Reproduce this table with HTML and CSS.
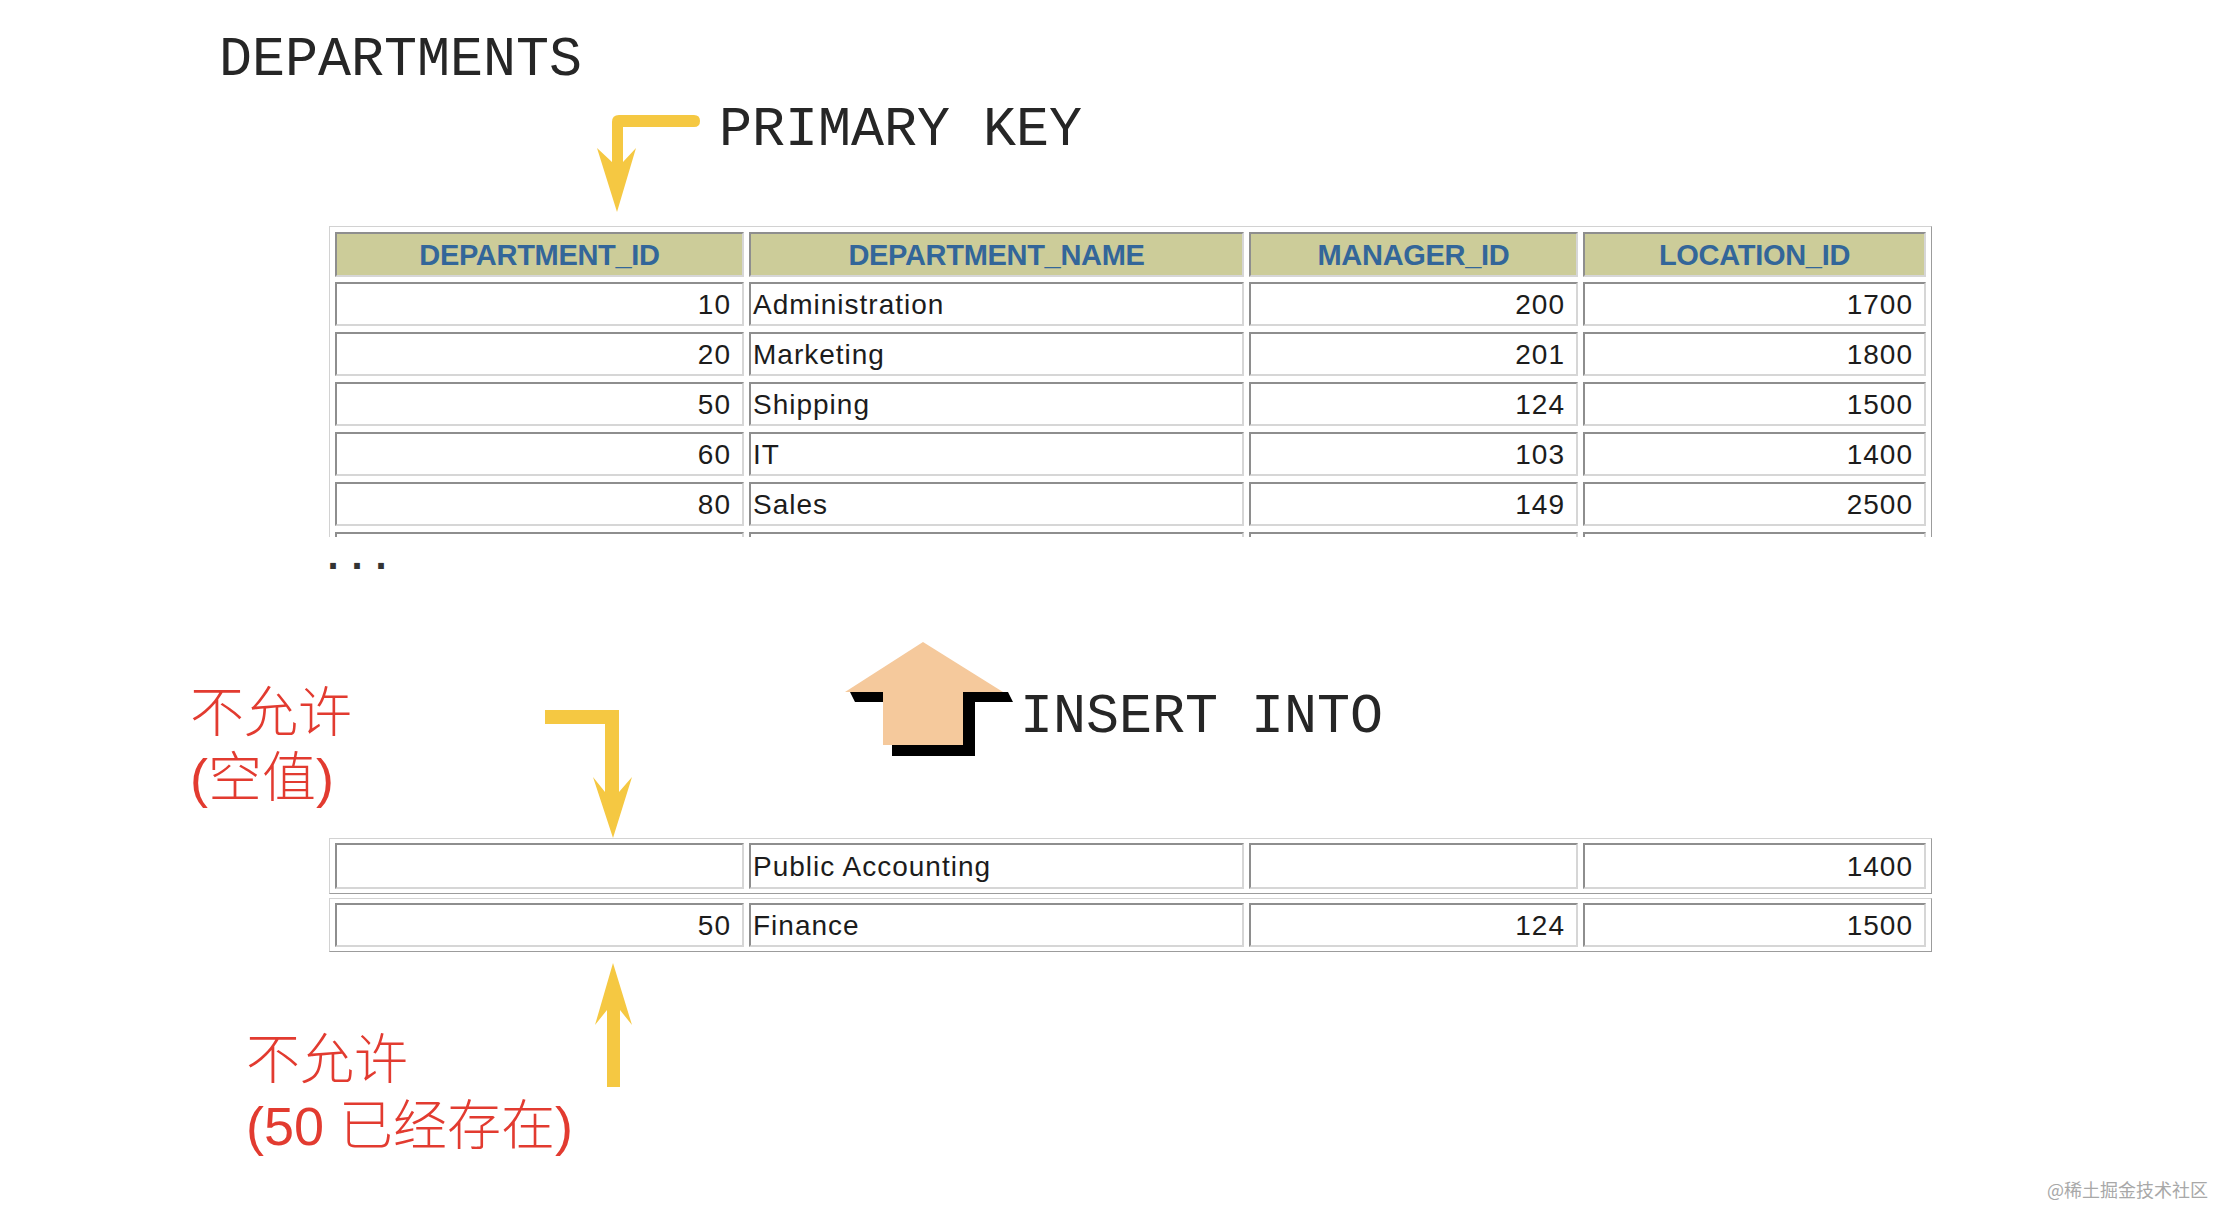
FILE: index.html
```html
<!DOCTYPE html>
<html lang="zh-CN">
<head>
<meta charset="utf-8">
<title>DEPARTMENTS – INSERT INTO</title>
<link rel="stylesheet" href="styles.css">
</head>
<body>
<main class="slide">
  <h1 class="mono title">DEPARTMENTS</h1>
  <div class="mono pk-label">PRIMARY KEY</div>

  <div class="table-window">
    <div class="db-table">
      <div class="cell th">DEPARTMENT_ID</div>
      <div class="cell th">DEPARTMENT_NAME</div>
      <div class="cell th">MANAGER_ID</div>
      <div class="cell th">LOCATION_ID</div>

      <div class="cell num">10</div><div class="cell">Administration</div><div class="cell num">200</div><div class="cell num">1700</div>
      <div class="cell num">20</div><div class="cell">Marketing</div><div class="cell num">201</div><div class="cell num">1800</div>
      <div class="cell num">50</div><div class="cell">Shipping</div><div class="cell num">124</div><div class="cell num">1500</div>
      <div class="cell num">60</div><div class="cell">IT</div><div class="cell num">103</div><div class="cell num">1400</div>
      <div class="cell num">80</div><div class="cell">Sales</div><div class="cell num">149</div><div class="cell num">2500</div>
      <div class="cell num"></div><div class="cell"></div><div class="cell num"></div><div class="cell num"></div>
    </div>
  </div>

  <div class="mono ellipsis">...</div>

  <div class="insert-row">
    <svg class="insert-arrow" width="178" height="120" viewBox="0 0 178 120" aria-hidden="true">
      <polygon points="10,52 168,52 173,62 135,62 135,116 52,116 52,62 15,62" fill="#000"/>
      <polygon points="83,2 163,52 123,52 123,105 43,105 43,52 5,52" fill="#f5c99c"/>
    </svg>
    <span class="mono insert-label">INSERT INTO</span>
  </div>

  <div class="new-rows">
    <div class="db-table single tall">
      <div class="cell num"></div><div class="cell">Public Accounting</div><div class="cell num"></div><div class="cell num">1400</div>
    </div>
    <div class="db-table single">
      <div class="cell num">50</div><div class="cell">Finance</div><div class="cell num">124</div><div class="cell num">1500</div>
    </div>
  </div>

  <p class="note note-dup">不允许<br>(50 已经存在)</p>

  <p class="note note-null">不允许<br>(空值)</p>

  <svg class="arrows" width="2216" height="1206" viewBox="0 0 2216 1206" aria-hidden="true">
    <path d="M612,122 Q612,115 619,115 L694,115 Q700,115 700,121 Q700,127 694,127 L623,127 L623,162 L636,148 L617,212 L597,148 L612,162 Z" fill="#f5c842"/>
    <path d="M545,710 L619,710 L619,792 L632,777 L613,838 L593,777 L605,792 L605,724 L545,724 Z" fill="#f5c842"/>
    <path d="M613,963 L632,1025 L620,1010 L620,1087 L607,1087 L607,1010 L595,1025 Z" fill="#f5c842"/>
  </svg>

  <div class="watermark">@稀土掘金技术社区</div>
</main>
</body>
</html>
```

FILE: styles.css
```css
html, body {
  margin: 0;
  padding: 0;
  background: #ffffff;
}

.slide {
  position: relative;
  width: 2216px;
  height: 1206px;
  overflow: hidden;
  padding-top: 31px;
  box-sizing: border-box;
  background: #ffffff;
}

.mono {
  font-family: "Liberation Mono", "DejaVu Sans Mono", monospace;
  font-size: 55px;
  line-height: 60px;
  font-weight: normal;
  color: #262626;
  white-space: pre;
}

.title {
  margin: 0 0 0 219px;
}

.pk-label {
  margin: 10px 0 0 719px;
}

.table-window {
  margin: 65px 0 0 329px;
  height: 311px;
  width: max-content;
  overflow: hidden;
}

.db-table {
  display: grid;
  grid-template-columns: 409px 495px 329px 343px;
  grid-auto-rows: 44px;
  column-gap: 5px;
  row-gap: 6px;
  padding: 5px;
  border: 1px solid;
  border-color: #d2d2d2 #9c9c9c #9c9c9c #d2d2d2;
  width: max-content;
  background: #ffffff;
}

.db-table.single {
  padding: 4px 5px;
}

.db-table.single.tall {
  grid-auto-rows: 46px;
}

.new-rows .db-table + .db-table {
  margin-top: 4px;
}

.cell {
  box-sizing: border-box;
  display: flex;
  align-items: center;
  border: 2px solid;
  border-color: #8e8e8e #d6d6d6 #d6d6d6 #8e8e8e;
  padding: 1px 11px 0 2px;
  font-family: "Liberation Sans", Arial, sans-serif;
  font-size: 28px;
  letter-spacing: 1px;
  color: #1c1c1c;
  white-space: nowrap;
  background: #ffffff;
}

.cell.num {
  justify-content: flex-end;
}

.cell.th {
  height: 45px;
  justify-content: center;
  padding: 1px 0 0;
  background: #cccc99;
  color: #336699;
  font-size: 29px;
  font-weight: bold;
  letter-spacing: -0.3px;
}

.ellipsis {
  margin: 12px 0 0 321px;
  font-size: 40px;
  line-height: 20px;
  font-weight: bold;
  color: #333333;
}

.insert-row {
  display: flex;
  align-items: flex-start;
  margin: 71px 0 0 840px;
  height: 120px;
}

.insert-arrow {
  display: block;
  flex: none;
}

.insert-label {
  margin: 48px 0 0 2px;
}

.new-rows {
  margin: 78px 0 0 329px;
  width: max-content;
}

.note {
  margin: 0;
  font-family: "Liberation Sans", "Noto Sans CJK SC", sans-serif;
  font-size: 54px;
  font-weight: 300;
  color: #e23b30;
  white-space: nowrap;
}

.note-dup {
  margin: 75px 0 0 246px;
  line-height: 66px;
}

.note-null {
  position: absolute;
  left: 190px;
  top: 681px;
  line-height: 65px;
}

.arrows {
  position: absolute;
  left: 0;
  top: 0;
  pointer-events: none;
}

.watermark {
  position: absolute;
  right: 8px;
  bottom: 5px;
  font-family: "Noto Sans CJK SC", sans-serif;
  font-size: 18px;
  line-height: 24px;
  color: #a8a8a8;
}
```
